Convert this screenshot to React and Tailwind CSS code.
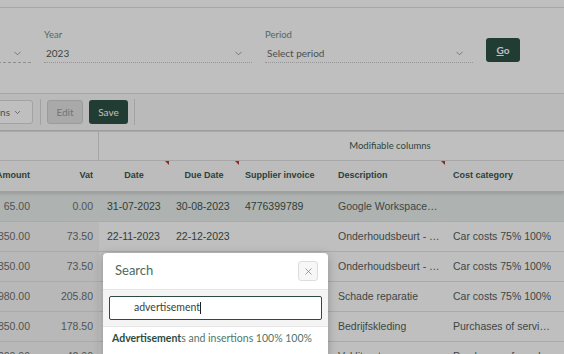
import { ChevronDown, X } from 'lucide-react';

const rows = [
  { amount: '65.00', vat: '0.00', date: '31-07-2023', due: '30-08-2023', invoice: '4776399789', desc: 'Google Workspace Business', cat: '', active: true },
  { amount: '350.00', vat: '73.50', date: '22-11-2023', due: '22-12-2023', invoice: '', desc: 'Onderhoudsbeurt - auto', cat: 'Car costs 75% 100%' },
  { amount: '350.00', vat: '73.50', date: '22-11-2023', due: '22-12-2023', invoice: '', desc: 'Onderhoudsbeurt - auto', cat: 'Car costs 75% 100%' },
  { amount: '980.00', vat: '205.80', date: '', due: '', invoice: '', desc: 'Schade reparatie', cat: 'Car costs 75% 100%' },
  { amount: '850.00', vat: '178.50', date: '', due: '', invoice: '', desc: 'Bedrijfskleding', cat: 'Purchases of services 100%' },
  { amount: '200.00', vat: '42.00', date: '', due: '', invoice: '', desc: 'Vakliteratuur', cat: 'Purchases of goods 100%' },
];

function Field({ label, value, muted }) {
  return (
    <div className="w-[208px] shrink-0">
      <div className="h-[14px] text-[9.5px] leading-[14px] text-[#6f8c81]">{label}</div>
      <div className="mt-[2px] h-[19px] flex items-center justify-between border-b border-dotted border-[#c9c9c9] pl-[2px] pr-[8px]">
        <span className={`text-[10px] ${muted ? 'text-[#666b69]' : 'text-[#4f5c56]'}`}>{value}</span>
        <ChevronDown className="w-[11px] h-[11px] text-[#7a7a7a]" strokeWidth={1.5} />
      </div>
    </div>
  );
}

function Flag() {
  return <span className="absolute top-0 right-0 w-0 h-0 border-t-[4px] border-l-[4px] border-t-[#c0392b] border-l-transparent" />;
}

export default function App() {
  return (
    <div className="relative w-[564px] h-[354px] overflow-hidden bg-white font-['Lato',sans-serif]">
      <div className="h-[7px]" />

      {/* Filters */}
      <div className="h-[87px] border-t border-b border-[#dedede] overflow-hidden">
        <div className="flex items-end gap-[13px] -ml-[177px] pt-[20px]">
          <div className="w-[208px] shrink-0">
            <div className="h-[14px] text-[9.5px] leading-[14px] text-[#6f8c81]">Administration</div>
            <div className="mt-[2px] h-[19px] flex items-center justify-end border-b border-dashed border-[#bdbdbd] pr-[8px]">
              <ChevronDown className="w-[11px] h-[11px] text-[#7a7a7a]" strokeWidth={1.5} />
            </div>
          </div>
          <Field label="Year" value="2023" />
          <Field label="Period" value="Select period" muted />
          <button className="w-[34px] h-[24px] rounded-[3px] bg-[#2b5045] text-white text-[10px] font-bold mb-[1px]">
            <span className="underline">G</span>o
          </button>
        </div>
      </div>

      {/* Toolbar */}
      <div className="h-[37px] bg-[#f8f8f8] border-b border-[#d4d4d4] flex items-center">
        <button className="-ml-[31px] w-[64px] h-[24px] flex items-center justify-end gap-[3px] pr-[10px] border border-[#d8d8d8] rounded-[3px] bg-white text-[10px] text-[#5b6e66]">
          Actions
          <ChevronDown className="w-[9px] h-[9px]" strokeWidth={2} />
        </button>
        <div className="ml-[7px] w-px h-[26px] bg-[#d9d9d9]" />
        <button className="ml-[6px] w-[36px] h-[24px] rounded-[3px] border border-[#cfcfcf] bg-[#e2e2e2] text-[10px] text-[#90a199]">Edit</button>
        <button className="ml-[6px] w-[39px] h-[24px] rounded-[3px] bg-[#2b5045] text-[10px] text-white">Save</button>
        <div className="ml-[6px] w-px h-[26px] bg-[#d9d9d9]" />
      </div>

      {/* Table */}
      <div className="-ml-[70px] font-['Liberation_Sans',Arial,sans-serif]">
        <div className="flex h-[30px] border-t border-b border-[#e0e0e0]">
          <div className="w-[169px] shrink-0 border-r border-[#dcdcdc]" />
          <div className="w-[582px] shrink-0 flex items-center justify-center font-['Lato',sans-serif] text-[9.5px] text-[#3f5a50]">Modifiable columns</div>
        </div>
        <div className="relative flex h-[31px] bg-[#fbfbfb] items-center text-[9px] font-bold text-[#3a564c] shadow-[0_2px_3px_rgba(0,0,0,0.12)] border-b border-[#d6d6d6]">
          <div className="w-[106px] shrink-0 text-right pr-[6px]">Amount</div>
          <div className="w-[63px] shrink-0 text-right pr-[6px]">Vat</div>
          <div className="relative w-[70px] h-full shrink-0 flex items-center justify-center">Date<Flag /></div>
          <div className="relative w-[70px] h-full shrink-0 flex items-center justify-center">Due Date<Flag /></div>
          <div className="w-[91px] shrink-0 pl-[6px]">Supplier invoice</div>
          <div className="relative w-[115px] h-full shrink-0 flex items-center pl-[8px]">Description<Flag /></div>
          <div className="w-[115px] shrink-0 pl-[8px]">Cost category</div>
        </div>
        {rows.map((r, i) => (
          <div key={i} className={`flex h-[30px] items-stretch text-[10.5px] border-b border-[#e3e3e3] ${r.active ? 'bg-[#e9eeec]' : ''}`}>
            <div className={`w-[106px] shrink-0 flex items-center justify-end pr-[6px] text-[#6b716e] ${r.active ? '' : 'bg-[#f6f6f6]'}`}>{r.amount}</div>
            <div className={`w-[63px] shrink-0 flex items-center justify-end pr-[6px] text-[#6b716e] ${r.active ? '' : 'bg-[#f6f6f6]'}`}>{r.vat}</div>
            <div className="w-[70px] shrink-0 flex items-center pl-[8px] text-[#3d554c]">{r.date}</div>
            <div className="w-[70px] shrink-0 flex items-center pl-[7px] text-[#3d554c]">{r.due}</div>
            <div className="w-[91px] shrink-0 flex items-center pl-[6px] text-[#3d554c]">{r.invoice}</div>
            <div className="w-[115px] shrink-0 flex items-center pl-[8px] pr-[5px] text-[#545e5a]"><span className="truncate">{r.desc}</span></div>
            <div className="w-[115px] shrink-0 flex items-center pl-[8px] pr-[5px] text-[#545e5a]"><span className="truncate">{r.cat}</span></div>
          </div>
        ))}
      </div>

      {/* Dim */}
      <div className="absolute inset-0 bg-black/25" />

      {/* Search dialog */}
      <div className="absolute left-[103px] top-[253px] w-[225px] h-[110px] bg-white rounded-t-[4px] shadow-[0_2px_10px_rgba(0,0,0,0.25)]">
        <div className="h-[36px] flex items-center justify-between pl-[12px] pr-[10px]">
          <span className="text-[13px] text-[#4a6a5f]">Search</span>
          <button className="w-[20px] h-[20px] flex items-center justify-center rounded-[3px] border border-[#dddddd] bg-[#f7f7f7] text-[#777]">
            <X className="w-[11px] h-[11px]" strokeWidth={1.5} />
          </button>
        </div>
        <div className="bg-[#f4f4f4] border-t border-b border-[#e6e6e6] px-[6px] py-[6px]">
          <div className="h-[24px] flex items-center pl-[24px] border border-[#2d4c41] rounded-[2px] bg-white text-[10.5px] text-[#3a3f3d]">
            advertisement<span className="inline-block w-px h-[12px] bg-[#222]" />
          </div>
        </div>
        <div className="pl-[9px] pt-[4px] text-[10.5px] leading-[14px] text-[#4f7568]">
          <span className="font-bold text-[#2b4d42]">Advertisement</span>s and insertions 100% 100%
        </div>
      </div>
    </div>
  );
}
